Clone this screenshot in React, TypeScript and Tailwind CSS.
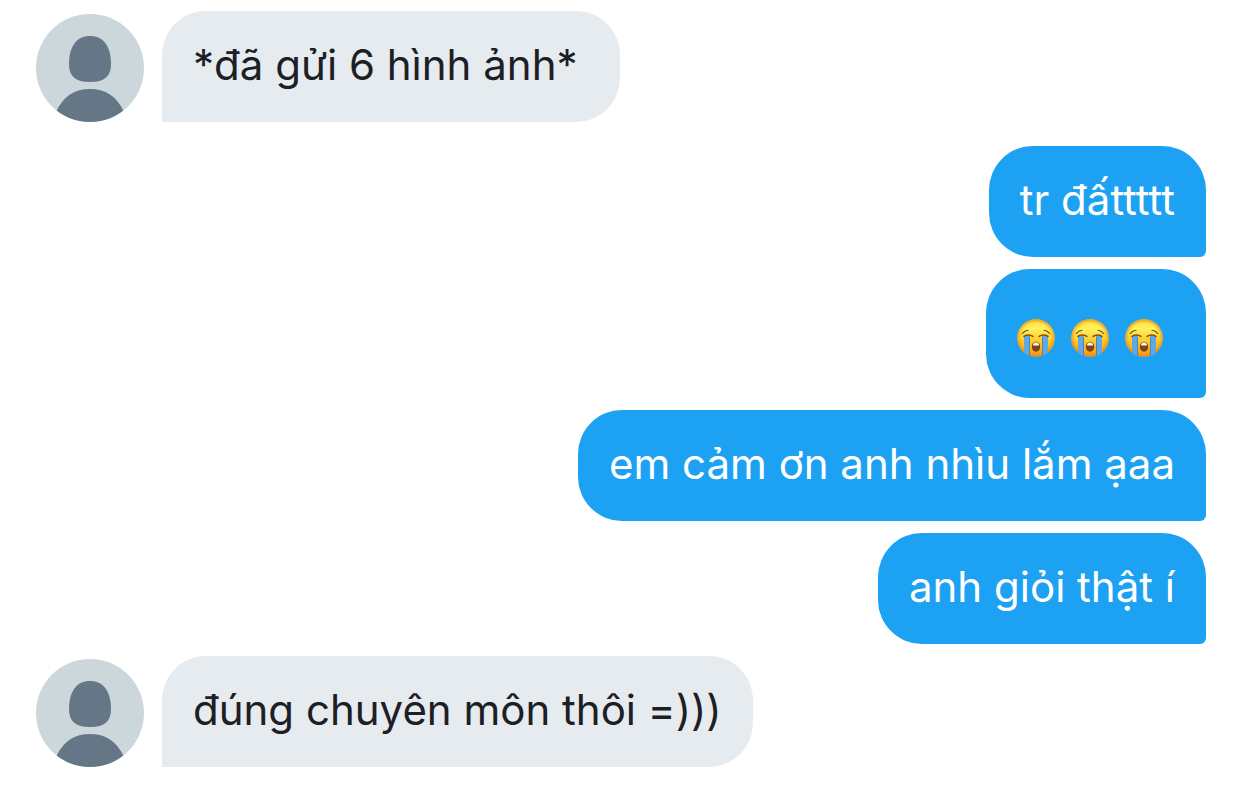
import clsx from "clsx";

type Message = {
  id: number;
  from: "me" | "them";
  text?: string;
  emojis?: number;
  endsGroup?: boolean;
};

// Text is shown as typed, trailing spaces included
const messages: Message[] = [
  { id: 1, from: "them", text: "*đã gửi 6 hình ảnh* ", endsGroup: true },
  { id: 2, from: "me", text: "tr đấttttt" },
  { id: 3, from: "me", emojis: 3 },
  { id: 4, from: "me", text: "em cảm ơn anh nhìu lắm ạaa" },
  { id: 5, from: "me", text: "anh giỏi thật í" },
  { id: 6, from: "them", text: "đúng chuyên môn thôi =)))" },
];

function Avatar() {
  return (
    <svg viewBox="0 0 108 108" className="size-[108px] shrink-0 rounded-full bg-[#ccd7dc]" aria-hidden="true">
      <path
        d="M54 22C67 22 75 32 75 50C75 62 69 68 54 68C39 68 33 62 33 50C33 32 41 22 54 22Z"
        fill="#657786"
      />
      <path d="M20 98C27 82 39 75 54 75C69 75 81 82 88 98V108H20Z" fill="#657786" />
    </svg>
  );
}

function CryingFace() {
  return (
    <svg viewBox="0 0 38 38" className="size-[38px]" role="img" aria-label="loudly crying face">
      <defs>
        <linearGradient id="face" x1="0" y1="0" x2="0" y2="1">
          <stop offset="0" stopColor="#fddb3a" />
          <stop offset="0.25" stopColor="#fff25c" />
          <stop offset="0.6" stopColor="#fdc929" />
          <stop offset="1" stopColor="#f7931b" />
        </linearGradient>
        <radialGradient id="rim" cx="0.5" cy="0.5" r="0.5">
          <stop offset="0.78" stopColor="#f08a12" stopOpacity="0" />
          <stop offset="1" stopColor="#e8860f" stopOpacity="0.75" />
        </radialGradient>
        <clipPath id="round">
          <circle cx="19" cy="19" r="19" />
        </clipPath>
      </defs>
      <g clipPath="url(#round)">
        <circle cx="19" cy="19" r="19" fill="url(#face)" />
        <circle cx="19" cy="19" r="19" fill="url(#rim)" />
        <path d="M7 17H13V38H7ZM25 17H31V38H25Z" fill="#62a9e2" />
        <path d="M12.5 18V38M25.5 18V38" stroke="#4688bd" />
      </g>
      <g fill="none" stroke="#7d4a12" strokeLinecap="round">
        <path d="M5.2 14.6C6.5 12.8 8.6 11.4 11 11.2M32.8 14.6C31.5 12.8 29.4 11.4 27 11.2" strokeWidth="1.1" />
        <path d="M7 17.4C9 15.4 13.5 15.4 15.8 17.4M22.2 17.4C24.500 15.4 29 15.4 31 17.4" strokeWidth="1.5" />
      </g>
      <ellipse cx="19" cy="27.800" rx="4.200" ry="5" fill="#7d4312" />
      <path d="M16 26.500C16.200 24 17.500 23.600 19 23.600C20.500 23.600 21.800 24 22 26.500Z" fill="#fff" />
    </svg>
  );
}

function Bubble({ message }: { message: Message }) {
  return (
    <div
      className={clsx(
        "rounded-t-[44px] px-[31px] text-[42px]",
        message.from === "me"
          ? "rounded-br-md rounded-bl-[44px] bg-[#1da1f2] text-white"
          : "rounded-br-[44px] bg-[#e6ebef] text-[#1c2024]",
      )}
    >
      {message.emojis ? (
        <div className="flex gap-4 pt-[50px] pr-3 pb-[41px]">
          {Array.from({ length: message.emojis }, (_, i) => (
            <CryingFace key={i} />
          ))}
        </div>
      ) : (
        <p className="pt-6 pb-[27px] leading-[60px] whitespace-pre">{message.text}</p>
      )}
    </div>
  );
}

export default function App() {
  return (
    <main className="min-h-screen bg-white px-9 pt-[11px] pb-5 font-['Inter','Liberation_Sans',sans-serif]">
      <ul className="flex flex-col gap-3">
        {messages.map((message) => (
          <li
            key={message.id}
            className={clsx(
              "flex items-end gap-[18px]",
              message.from === "me" && "justify-end",
              message.endsGroup && "mb-3",
            )}
          >
            {message.from === "them" ? <Avatar /> : null}
            <Bubble message={message} />
          </li>
        ))}
      </ul>
    </main>
  );
}
